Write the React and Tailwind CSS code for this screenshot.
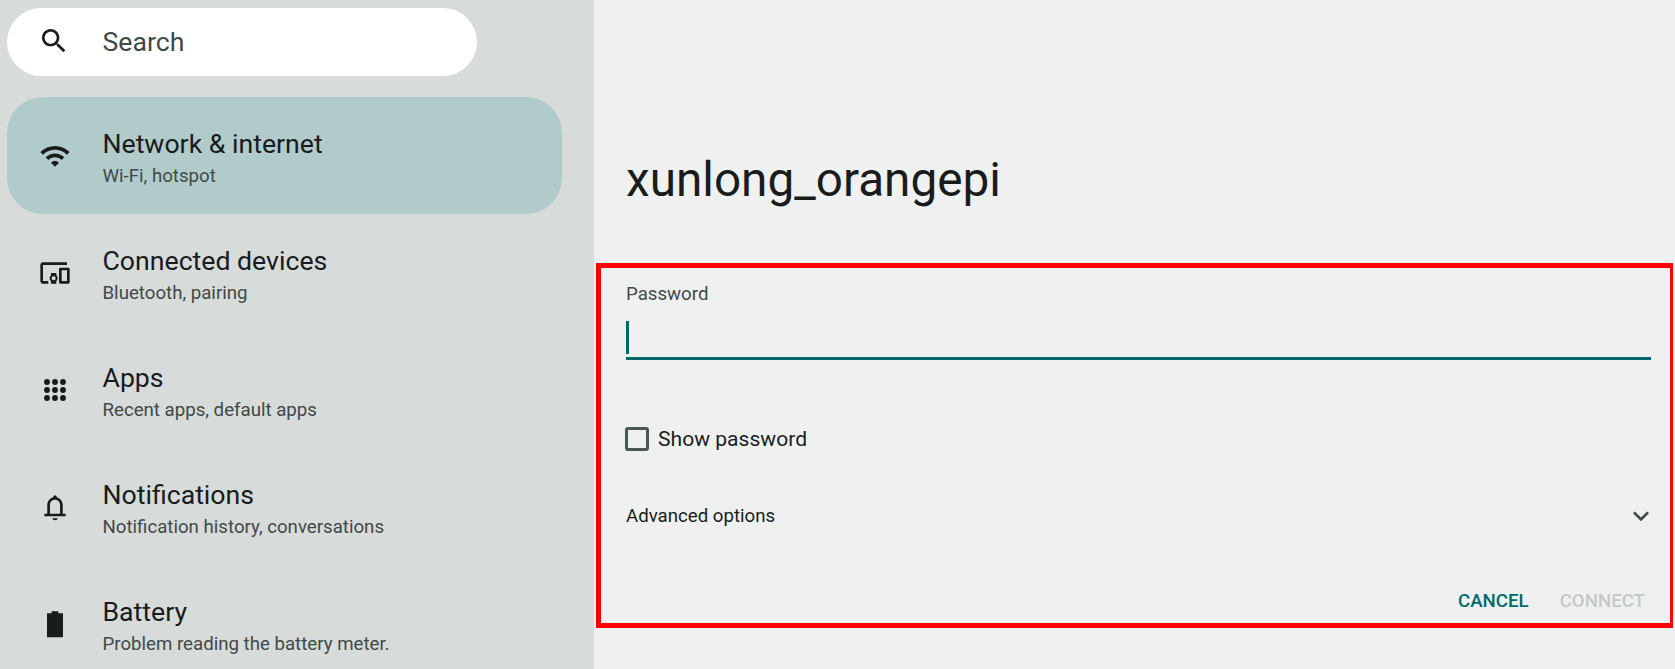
import React from "react";

const Icon = ({ className = "", children }) => (
  <svg viewBox="0 0 24 24" className={`w-8 h-8 fill-[#191c1c] ${className}`}>
    {children}
  </svg>
);

const items = [
  {
    title: "Network & internet",
    sub: "Wi-Fi, hotspot",
    active: true,
    icon: (
      <Icon>
        <path d="M1 9l2 2c4.97-4.97 13.03-4.97 18 0l2-2C16.93 2.93 7.08 2.93 1 9zm8 8l3 3 3-3c-1.65-1.66-4.34-1.66-6 0zm-4-4l2 2c2.76-2.76 7.24-2.76 10 0l2-2C15.14 9.14 8.87 9.14 5 13z" />
      </Icon>
    ),
  },
  {
    title: "Connected devices",
    sub: "Bluetooth, pairing",
    icon: (
      <Icon>
        <path d="M3 6h18V4H3c-1.1 0-2 .9-2 2v12c0 1.1.9 2 2 2h4v-2H3V6zm10 6H9v1.78c-.61.55-1 1.33-1 2.22s.39 1.67 1 2.22V20h4v-1.78c.61-.55 1-1.34 1-2.22s-.39-1.67-1-2.22V12zm-2 5.5c-.83 0-1.5-.67-1.5-1.5s.67-1.5 1.5-1.5 1.5.67 1.5 1.5-.67 1.5-1.5 1.5zM22 8h-6c-.5 0-1 .5-1 1v10c0 .5.5 1 1 1h6c.5 0 1-.5 1-1V9c0-.5-.5-1-1-1zm-1 10h-4v-8h4v8z" />
      </Icon>
    ),
  },
  {
    title: "Apps",
    sub: "Recent apps, default apps",
    icon: (
      <Icon>
        {[6, 12, 18].map((y) =>
          [6, 12, 18].map((x) => <circle key={`${x}-${y}`} cx={x} cy={y} r="2.2" />)
        )}
      </Icon>
    ),
  },
  {
    title: "Notifications",
    sub: "Notification history, conversations",
    icon: (
      <Icon>
        <path
          fillRule="evenodd"
          d="M4 19v-2h2.2v-6.5C6.2 7.7 8 5.5 10.5 4.6 10.8 3.8 11.4 3.2 12 3.2s1.2.6 1.5 1.4c2.5.9 4.3 3.1 4.3 5.9V17H20v2H4zm4.2-2h7.6v-6.5c0-2.4-1.5-4-3.8-4s-3.8 1.6-3.8 4V17zM10 20.5h4c0 1-1 1.5-2 1.5s-2-.5-2-1.5z"
        />
      </Icon>
    ),
  },
  {
    title: "Battery",
    sub: "Problem reading the battery meter.",
    icon: (
      <Icon>
        <path d="M6 22V4h3.5V2.5h5V4H18v18z" />
      </Icon>
    ),
  },
];

const NavRow = ({ item }) => (
  <div
    className={`flex items-center h-[117px] shrink-0 ${
      item.active ? "bg-[#b0cbca] rounded-[36px]" : ""
    }`}
  >
    <div className="w-[95.5px] flex justify-center">{item.icon}</div>
    <div className="flex flex-col mt-[5px]">
      <span className="text-[26.67px] leading-[32px] text-[#191c1c]">{item.title}</span>
      <span className="text-[18.67px] leading-[25px] mt-[4px] text-[#3f4948]">{item.sub}</span>
    </div>
  </div>
);

export default function App() {
  return (
    <div className="flex w-[1675px] h-[669px] overflow-hidden bg-[#eff1f1] font-['Roboto',sans-serif]">
      <aside className="w-[594px] shrink-0 bg-[#d7dbda] pt-[8px] px-[7px] pr-[32px] flex flex-col">
        <div className="w-[470px] h-[68px] shrink-0 bg-white rounded-[34px] flex items-center mb-[21px]">
          <div className="w-[95.5px] flex justify-center pr-[1px] -mt-[2px]">
            <Icon className="fill-[#3f4948]">
              <path d="M15.5 14h-.79l-.28-.27C15.41 12.59 16 11.11 16 9.5 16 5.91 13.09 3 9.5 3S3 5.91 3 9.5 5.91 16 9.5 16c1.61 0 3.09-.59 4.23-1.57l.27.28v.79l5 4.99L20.49 19l-4.99-5zm-6 0C7.01 14 5 11.99 5 9.5S7.01 5 9.5 5 14 7.01 14 9.5 11.99 14 9.5 14z" />
            </Icon>
          </div>
          <span className="text-[26.67px] text-[#3f4948]">Search</span>
        </div>
        {items.map((item) => (
          <NavRow key={item.title} item={item} />
        ))}
      </aside>
      <main className="flex-1 flex flex-col pl-[2px]">
        <h1 className="h-[263px] pt-[150px] pl-[30px] text-[47.7px] leading-[60px] text-[#191c1c] font-normal">
          xunlong_orangepi
        </h1>
        <section className="h-[365px] border-[5px] border-r-[3px] mr-[2px] border-[#ff0000] pl-[25px] pr-[19px] flex flex-col">
          <label className="text-[18.67px] leading-[24px] mt-[14px] text-[#3f4948]">Password</label>
          <div className="h-[46px] mt-[8px] border-b-[3px] border-[#006a6a] flex items-start pt-[7px]">
            <div className="w-[3px] h-[33px] bg-[#006a6a]" />
          </div>
          <div className="flex items-center mt-[67px] h-[24px]">
            <div className="w-[24px] h-[24px] -ml-[1px] rounded-[3px] border-[3px] border-[#4b5554]" />
            <span className="ml-[9px] text-[21.1px] text-[#191c1c]">Show password</span>
          </div>
          <div className="flex items-center justify-between mt-[53px] h-[24px]">
            <span className="text-[18.67px] text-[#191c1c]">Advanced options</span>
            <svg viewBox="0 0 24 24" className="w-8 h-8 -mr-[6px] fill-[#3f4948]">
              <path d="M16.59 8.59L12 13.17 7.41 8.59 6 10l6 6 6-6z" />
            </svg>
          </div>
          <div className="flex justify-end gap-[31px] mt-[61px] text-[18.67px] font-medium leading-[24px] pr-[6px]">
            <span className="text-[#006a6a]">CANCEL</span>
            <span className="text-[#c6c8c8]">CONNECT</span>
          </div>
        </section>
      </main>
    </div>
  );
}
